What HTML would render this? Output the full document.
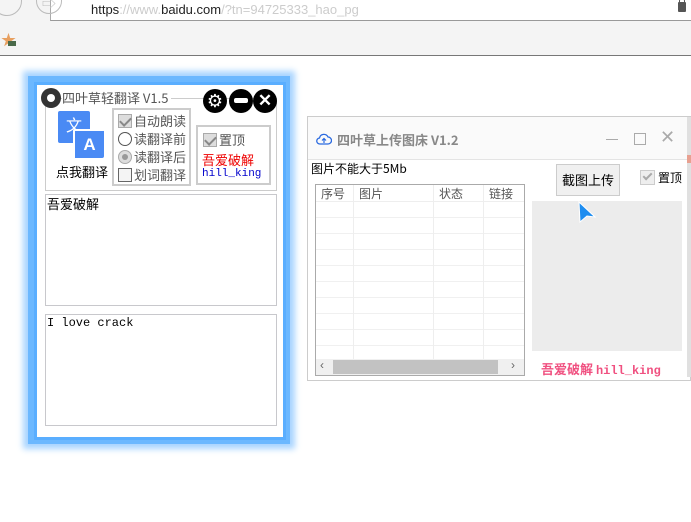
<!DOCTYPE html>
<html><head><meta charset="utf-8"><style>
*{margin:0;padding:0;box-sizing:border-box}
body{width:691px;height:522px;background:#fff;position:relative;overflow:hidden;font-family:"Liberation Sans","Noto Sans CJK SC",sans-serif;font-size:13px}
.abs{position:absolute}
.cn{font-family:"Noto Sans CJK SC","WenQuanYi Zen Hei",sans-serif}
.mono{font-family:"Liberation Mono","Noto Sans CJK SC",monospace}
.chk{display:inline-block;width:14px;height:14px;border:1px solid #aaa;background:#ddd;vertical-align:-2px;margin-right:2px;position:relative}
.chk.on:after{content:"";position:absolute;left:3px;top:0px;width:5px;height:9px;border:solid #888;border-width:0 2px 2px 0;transform:rotate(45deg)}
.rad{display:inline-block;width:14px;height:14px;border:1px solid #555;border-radius:50%;vertical-align:-2px;margin-right:2px;background:#fff;position:relative}
.rad.on{background:#ddd;border-color:#aaa}
.rad.on:after{content:"";position:absolute;left:3px;top:3px;width:6px;height:6px;border-radius:50%;background:#999}
</style></head><body>
<!-- browser chrome -->
<div class="abs" style="left:0;top:0;width:691px;height:56px;background:#f4f4f4;border-bottom:1px solid #777"></div>
<div class="abs" style="left:50px;top:0;width:641px;height:21px;background:#fff;border-left:1px solid #aaa;border-bottom:1px solid #999"></div>
<div class="abs" style="left:-8px;top:-14px;width:30px;height:30px;border:1px solid #bbb;border-radius:50%"></div>
<div class="abs" style="left:36px;top:-12px;width:26px;height:26px;border:1px solid #bbb;border-radius:50%;color:#bbb;font-size:14px;text-align:center;line-height:30px">⇨</div>
<div class="abs" style="left:91px;top:2px;font-size:13px;color:#222">https<span style="color:#ccc">://www.</span>baidu.com<span style="color:#ccc">/?tn=94725333_hao_pg</span></div>
<div class="abs" style="left:678px;top:2px;width:8px;height:10px;background:#555;border-radius:1px"></div>
<div class="abs" style="left:679px;top:-2px;width:6px;height:7px;border:1px solid #555;border-radius:3px 3px 0 0"></div>
<div class="abs" style="left:1px;top:33px;color:#e8a060;font-size:15px;line-height:15px">★</div>
<div class="abs" style="left:8px;top:41px;width:8px;height:5px;background:#4a6a4a"></div>

<!-- left window -->
<div class="abs" style="left:28px;top:76px;width:262px;height:368px;background:#6cb8ff;box-shadow:0 0 6px 5px #a8d4ff"></div>
<div class="abs" style="left:37px;top:85px;width:246px;height:352px;background:#fff;box-shadow:0 0 0 3px #5aaeff"></div>
<div class="abs" style="left:45px;top:98px;width:232px;height:93px;border:1px solid #ccc"></div>
<div class="abs" style="left:41px;top:88px;width:20px;height:20px;border-radius:50%;background:#333"></div>
<div class="abs" style="left:47px;top:94px;width:8px;height:8px;border-radius:50%;background:#fff"></div>
<div class="abs cn" style="left:62px;top:89px;font-size:13px;color:#555;background:#fff;padding-right:3px;line-height:18px">四叶草轻翻译 V1.5</div>
<div class="abs" style="left:203px;top:89px;width:24px;height:24px;border-radius:50%;background:#000;color:#fff;font-size:18px;text-align:center;line-height:24px">⚙</div>
<div class="abs" style="left:229px;top:89px;width:24px;height:24px;border-radius:50%;background:#000"><div style="margin:9px 5px;width:14px;height:5px;background:#fff;border-radius:2px"></div></div>
<div class="abs" style="left:253px;top:89px;width:24px;height:24px;border-radius:50%;background:#000;color:#fff;font-size:17px;font-weight:bold;text-align:center;line-height:24px">✕</div>
<!-- translate logo -->
<div class="abs cn" style="left:58px;top:111px;width:32px;height:32px;background:#4a8af4;border-radius:2px;color:#fff;font-size:16px;text-align:center;line-height:26px">文</div>
<div class="abs" style="left:73px;top:129px;width:31px;height:29px;background:#4a8af4;border-radius:2px;border-left:2px solid #fff;border-top:2px solid #fff;color:#fff;font-weight:bold;font-size:17px;text-align:center;line-height:27px">A</div>
<div class="abs cn" style="left:56px;top:162px;font-size:13px;color:#000">点我翻译</div>
<div class="abs" style="left:112px;top:108px;width:79px;height:78px;border:2px solid #ccc"></div>
<div class="abs cn" style="left:118px;top:112px;font-size:13px;color:#555;line-height:18px">
<div><span class="chk on"></span>自动朗读</div>
<div><span class="rad"></span>读翻译前</div>
<div><span class="rad on"></span>读翻译后</div>
<div><span class="chk" style="border-color:#666;background:#f4f4f4"></span>划词翻译</div></div>
<div class="abs" style="left:196px;top:125px;width:75px;height:60px;border:2px solid #ccc"></div>
<div class="abs cn" style="left:203px;top:130px;font-size:13px;color:#555"><span class="chk on"></span>置顶</div>
<div class="abs cn" style="left:202px;top:150px;font-size:13px;color:#e00">吾爱破解</div>
<div class="abs mono" style="left:202px;top:168px;font-size:11px;color:#00c">hill_king</div>
<div class="abs" style="left:45px;top:194px;width:232px;height:112px;border:1px solid #c8c8cc"></div>
<div class="abs cn" style="left:47px;top:194px;font-size:13px;color:#000">吾爱破解</div>
<div class="abs" style="left:45px;top:314px;width:232px;height:112px;border:1px solid #c8c8cc"></div>
<div class="abs mono" style="left:47px;top:316px;font-size:12px;color:#000">I love crack</div>

<!-- right window -->
<div class="abs" style="left:307px;top:116px;width:384px;height:265px;border:1px solid #ccc;background:#fff"></div>
<div class="abs" style="left:308px;top:117px;width:383px;height:43px;background:#fafafa;border-bottom:1px solid #e4e4e4"></div>
<div class="abs" style="left:687px;top:117px;width:4px;height:260px;background:#e0e0e0"></div>
<div class="abs" style="left:687px;top:155px;width:4px;height:8px;background:#e8a090"></div>
<svg class="abs" style="left:316px;top:131px" width="16" height="16"><path d="M4 13 H12 A3.5 3.5 0 0 0 12 6 A4.5 4.5 0 0 0 3.5 7 A3 3 0 0 0 4 13 Z" fill="none" stroke="#2a6ae0" stroke-width="1.3"/><path d="M8 12V7.5M6 9.5L8 7.5L10 9.5" fill="none" stroke="#2a6ae0" stroke-width="1.2"/></svg>
<div class="abs cn" style="left:337px;top:130px;font-size:13px;font-weight:bold;color:#888">四叶草上传图床 V1.2</div>
<div class="abs" style="left:606px;top:139px;width:12px;height:1px;background:#aaa"></div>
<div class="abs" style="left:634px;top:133px;width:12px;height:12px;border:1.5px solid #aaa"></div>
<div class="abs" style="left:660px;top:127px;font-size:18px;color:#aaa">✕</div>
<div class="abs cn" style="left:311px;top:160px;font-size:12px;color:#000">图片不能大于5Mb</div>
<div class="abs" style="left:315px;top:184px;width:210px;height:192px;border:1px solid #aaa;background:#fff;
background-image:repeating-linear-gradient(#fff 0 15px,#f0f0f0 15px 16px);background-position:0 17px"></div>
<div class="abs" style="left:316px;top:185px;width:208px;height:17px;background:#fff;border-bottom:1px solid #eee"></div>
<div class="abs" style="left:353px;top:185px;width:1px;height:174px;background:#eee"></div>
<div class="abs" style="left:433px;top:185px;width:1px;height:174px;background:#eee"></div>
<div class="abs" style="left:483px;top:185px;width:1px;height:174px;background:#eee"></div>
<div class="abs cn" style="left:321px;top:186px;font-size:12px;color:#555;line-height:16px">序号</div>
<div class="abs cn" style="left:359px;top:186px;font-size:12px;color:#555;line-height:16px">图片</div>
<div class="abs cn" style="left:439px;top:186px;font-size:12px;color:#555;line-height:16px">状态</div>
<div class="abs cn" style="left:489px;top:186px;font-size:12px;color:#555;line-height:16px">链接</div>
<div class="abs" style="left:316px;top:359px;width:208px;height:16px;background:#f0f0f0"></div>
<div class="abs" style="left:333px;top:360px;width:165px;height:14px;background:#c2c2c2"></div>
<div class="abs" style="left:320px;top:358px;font-size:12px;color:#666">‹</div>
<div class="abs" style="left:511px;top:358px;font-size:12px;color:#666">›</div>
<div class="abs cn" style="left:556px;top:164px;width:64px;height:32px;border:1px solid #ccc;background:#f0f0f0;font-size:13px;text-align:center;line-height:30px;color:#000">截图上传</div>
<div class="abs" style="left:640px;top:170px;width:15px;height:15px;border:1px solid #ccc;background:#eee"></div>
<div class="abs" style="left:645px;top:171px;width:5px;height:9px;border:solid #aaa;border-width:0 2px 2px 0;transform:rotate(45deg)"></div>
<div class="abs cn" style="left:658px;top:169px;font-size:12px;color:#000">置顶</div>
<div class="abs" style="left:532px;top:201px;width:150px;height:150px;background:#ececec"></div>
<svg class="abs" style="left:578px;top:200px" width="20" height="25"><path d="M1 2 L17 17 L9 16 L2 22 Z" fill="#1e8df0" stroke="#fff" stroke-width="1"/></svg>
<div class="abs cn" style="left:541px;top:359px;font-size:13px;font-weight:bold;color:#f05080">吾爱破解 <span class="mono" style="font-size:12px">hill_king</span></div>
</body></html>
